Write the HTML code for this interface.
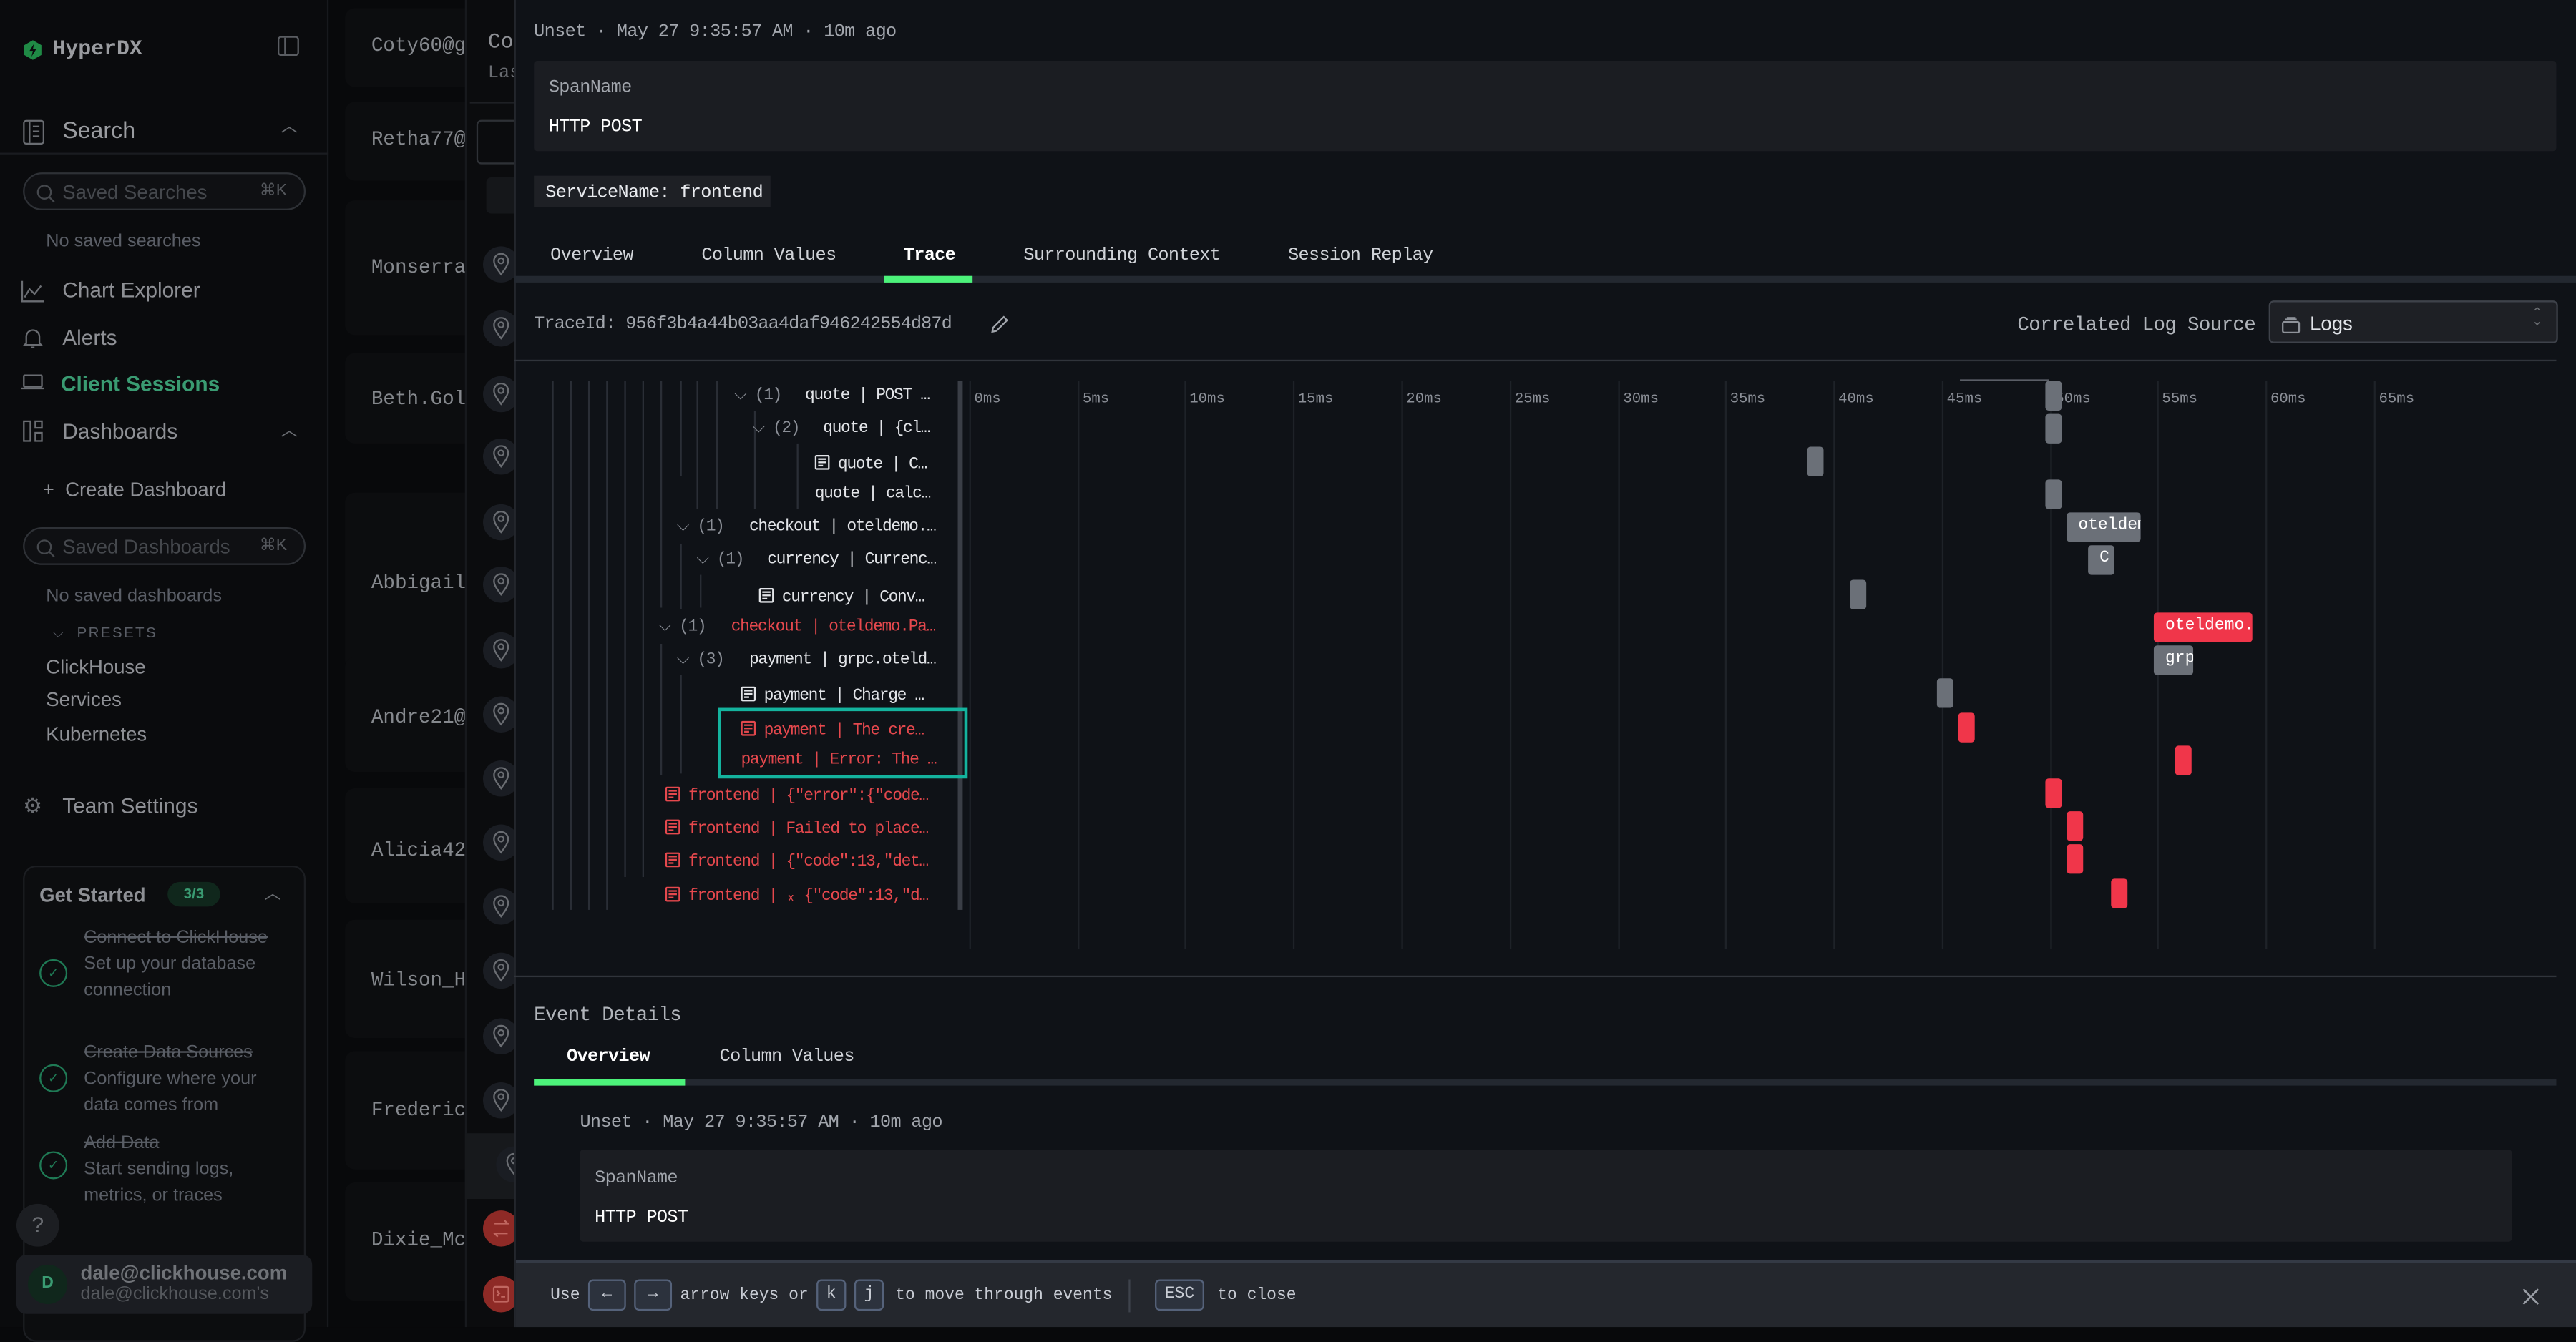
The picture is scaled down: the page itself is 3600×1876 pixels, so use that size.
<!DOCTYPE html>
<html><head><meta charset="utf-8">
<style>
*{margin:0;padding:0;box-sizing:border-box}
html,body{width:3600px;height:1856px;overflow:hidden;background:#08090b}
#w{position:absolute;left:0;top:0;width:1568px;height:808px;transform:scale(2.29592);transform-origin:0 0;background:#08090b;font-family:"Liberation Mono",monospace;}
.a{position:absolute;white-space:nowrap;line-height:1}
.a:not([style*="height"]){margin-top:2px}
.s{font-family:"Liberation Sans",sans-serif}
.m{font-family:"Liberation Mono",monospace}
.tr{font-size:10px;letter-spacing:-0.6px;color:#e2e4e8}
.red{color:#e5484d}
.mu{color:#8b8f97}
.vl{position:absolute;width:1px;background:#2a2e36}
.gl{position:absolute;width:1px;top:232px;height:346px;background:#1e2228}
.bar{position:absolute;height:18px;border-radius:2px;background:#6b7078;color:#fff;font-size:10px;line-height:18px;padding-left:7px;overflow:hidden}
.rb{background:#f0364a}
.kbd{position:absolute;top:779px;height:19px;border:1px solid #55627a;border-radius:3px;background:#2c323d;color:#c8ccd4;font-size:10px;text-align:center;line-height:17px}
.pin{position:absolute;left:294px;width:22px;height:22px;border-radius:11px;background:#1a1d23}
.pin svg{position:absolute;left:6px;top:4px}
.ic{display:inline-block;width:9px;height:9px;border:1px solid currentColor;border-radius:1px;vertical-align:-1px;margin-right:5px;background:linear-gradient(currentColor,currentColor) 1px 1px/5px 1px no-repeat,linear-gradient(currentColor,currentColor) 1px 3px/5px 1px no-repeat,linear-gradient(currentColor,currentColor) 1px 5px/3px 1px no-repeat}
.ck{position:absolute;left:24px;width:17px;height:17px;border:1px solid #1f7a55;border-radius:50%;color:#1f7a55;font-size:8px;text-align:center;line-height:15px;font-family:"DejaVu Sans",sans-serif}
</style></head><body><div id="w">

<!-- Sidebar -->
<div style="position:absolute;left:0;top:0;width:200px;height:808px;background:#0a0b0d;border-right:1px solid #17191d"></div>
<svg class="a" style="left:14px;top:22px" width="12" height="13" viewBox="0 0 12 13"><path d="M6 0.5L11.2 3.5V9.5L6 12.5L0.8 9.5V3.5Z" fill="#1f8a45"/><path d="M6.8 2.5L4 7H6L5.2 10.5L8 6H6Z" fill="#0a0b0d"/></svg>
<div class="a m" style="left:32px;top:21px;font-size:13px;font-weight:bold;color:#9a9ca0">HyperDX</div>
<div class="a" style="left:169px;top:22px;width:13px;height:12px;border:1px solid #5a5d62;border-radius:2px"><div style="position:absolute;left:3px;top:0;width:1px;height:10px;background:#5a5d62"></div></div>
<svg class="a" style="left:14px;top:71px" width="13" height="15" viewBox="0 0 13 15"><rect x="0.5" y="0.5" width="12" height="14" rx="1.5" fill="none" stroke="#6a6d72"/><path d="M4 1V14M6 4H10M6 7H10M6 10H10" stroke="#6a6d72"/></svg>
<div class="a s" style="left:38px;top:70px;font-size:14px;color:#9a9ca0">Search</div>
<div class="a s" style="left:171px;top:71px;font-size:10px;color:#6a6d72">︿</div>
<div class="a" style="left:0;top:93px;width:200px;height:1px;background:#1a1c20"></div>
<div class="a" style="left:14px;top:105px;width:172px;height:23px;border:1px solid #2e3136;border-radius:12px;background:#0f1013"></div>
<svg class="a" style="left:22px;top:110px" width="12" height="12" viewBox="0 0 12 12"><circle cx="5" cy="5" r="4" fill="none" stroke="#45484d"/><path d="M8 8L11 11" stroke="#45484d"/></svg>
<div class="a s" style="left:38px;top:109px;font-size:12px;color:#45484d">Saved Searches</div>
<div class="a s" style="left:158px;top:110px;font-size:10px;color:#55585d">⌘K</div>
<div class="a s" style="left:28px;top:140px;font-size:11px;color:#5a5e66">No saved searches</div>
<div class="a s" style="left:38px;top:168px;font-size:13px;color:#8e9095">Chart Explorer</div>
<div class="a s" style="left:38px;top:197px;font-size:13px;color:#8e9095">Alerts</div>
<div class="a s" style="left:37px;top:225px;font-size:13px;color:#3a9b72;font-weight:bold">Client Sessions</div>
<div class="a s" style="left:38px;top:254px;font-size:13px;color:#8e9095">Dashboards</div>
<div class="a s" style="left:171px;top:256px;font-size:10px;color:#6a6d72">︿</div>
<svg class="a" style="left:13px;top:169px" width="14" height="13" viewBox="0 0 14 13"><path d="M0.5 0V12.5H14M2 10L5 5L8 8L12 3" fill="none" stroke="#6a6d72"/></svg>
<svg class="a" style="left:14px;top:197px" width="12" height="14" viewBox="0 0 12 14"><path d="M2 10V6A4 4 0 0 1 10 6V10L11 11H1Z M5 12.5H7" fill="none" stroke="#6a6d72"/></svg>
<div class="a" style="left:14px;top:228px;width:12px;height:8px;border:1px solid #6a6d72;border-radius:1px"></div>
<div class="a" style="left:13px;top:236px;width:14px;height:1px;background:#6a6d72"></div>
<div class="a" style="left:14px;top:256px;width:5px;height:13px;border:1px solid #6a6d72"></div>
<div class="a" style="left:21px;top:256px;width:5px;height:5px;border:1px solid #6a6d72"></div>
<div class="a" style="left:21px;top:263px;width:5px;height:6px;border:1px solid #6a6d72"></div>
<div class="a s" style="left:26px;top:290px;font-size:12px;color:#8e9095">+ &nbsp;Create Dashboard</div>
<div class="a" style="left:14px;top:321px;width:172px;height:23px;border:1px solid #2e3136;border-radius:12px;background:#0f1013"></div>
<svg class="a" style="left:22px;top:326px" width="12" height="12" viewBox="0 0 12 12"><circle cx="5" cy="5" r="4" fill="none" stroke="#45484d"/><path d="M8 8L11 11" stroke="#45484d"/></svg>
<div class="a s" style="left:38px;top:325px;font-size:12px;color:#45484d">Saved Dashboards</div>
<div class="a s" style="left:158px;top:326px;font-size:10px;color:#55585d">⌘K</div>
<div class="a s" style="left:28px;top:356px;font-size:11px;color:#5a5e66">No saved dashboards</div>
<div class="a s" style="left:32px;top:379px;font-size:9px;color:#5a5e66;letter-spacing:1px">⌵ &nbsp;PRESETS</div>
<div class="a s" style="left:28px;top:398px;font-size:12px;color:#8e9095">ClickHouse</div>
<div class="a s" style="left:28px;top:418px;font-size:12px;color:#8e9095">Services</div>
<div class="a s" style="left:28px;top:439px;font-size:12px;color:#8e9095">Kubernetes</div>
<div class="a s" style="left:14px;top:482px;font-size:13px;color:#6a6d72">⚙</div>
<div class="a s" style="left:38px;top:482px;font-size:13px;color:#8e9095">Team Settings</div>
<div class="a" style="left:14px;top:527px;width:172px;height:290px;border:1px solid #1c1e22;border-radius:8px;background:#0c0d0f"></div>
<div class="a s" style="left:24px;top:537px;font-size:12px;font-weight:bold;color:#8e9095">Get Started</div>
<div class="a s" style="left:102px;top:537px;width:32px;height:15px;border-radius:8px;background:#10271c;color:#3a9b72;font-size:9px;font-weight:bold;text-align:center;line-height:15px">3/3</div>
<div class="a s" style="left:161px;top:538px;font-size:10px;color:#6a6d72">︿</div>
<div class="a s" style="left:51px;top:563px;font-size:11px;line-height:16px;color:#5a5e66;white-space:normal;width:120px"><s>Connect to ClickHouse</s><br>Set up your database connection</div>
<div class="a s" style="left:51px;top:633px;font-size:11px;line-height:16px;color:#5a5e66;white-space:normal;width:125px"><s>Create Data Sources</s><br>Configure where your data comes from</div>
<div class="a s" style="left:51px;top:688px;font-size:11px;line-height:16px;color:#5a5e66;white-space:normal;width:120px"><s>Add Data</s><br>Start sending logs, metrics, or traces</div>
<div class="ck" style="top:584px">✓</div>
<div class="ck" style="top:648px">✓</div>
<div class="ck" style="top:701px">✓</div>
<div class="a s" style="left:10px;top:733px;width:26px;height:26px;border-radius:13px;background:#1c1e22;color:#6a6d72;font-size:13px;text-align:center;line-height:26px">?</div>
<div class="a" style="left:10px;top:764px;width:180px;height:36px;border-radius:6px;background:#1b1d22"></div>
<div class="a s" style="left:17px;top:770px;width:24px;height:24px;border-radius:12px;background:#10271c;color:#3a9b72;font-size:10px;font-weight:bold;text-align:center;line-height:24px">D</div>
<div class="a s" style="left:49px;top:767px;font-size:12px;font-weight:bold;color:#707378">dale@clickhouse.com</div>
<div class="a s" style="left:49px;top:781px;font-size:11px;color:#55585d">dale@clickhouse.com's</div>

<!-- middle list -->
<div class="a" style="left:210px;top:5px;width:80px;height:48px;background:#0c0d0f;border-radius:6px"></div>
<div class="a" style="left:210px;top:62px;width:80px;height:48px;background:#0c0d0f;border-radius:6px"></div>
<div class="a" style="left:210px;top:122px;width:80px;height:82px;background:#0c0d0f;border-radius:6px"></div>
<div class="a" style="left:210px;top:215px;width:80px;height:55px;background:#0c0d0f;border-radius:6px"></div>
<div class="a" style="left:210px;top:300px;width:80px;height:108px;background:#0c0d0f;border-radius:6px"></div>
<div class="a" style="left:210px;top:400px;width:80px;height:70px;background:#0c0d0f;border-radius:6px"></div>
<div class="a" style="left:210px;top:480px;width:80px;height:70px;background:#0c0d0f;border-radius:6px"></div>
<div class="a" style="left:210px;top:560px;width:80px;height:72px;background:#0c0d0f;border-radius:6px"></div>
<div class="a" style="left:210px;top:640px;width:80px;height:72px;background:#0c0d0f;border-radius:6px"></div>
<div class="a" style="left:210px;top:720px;width:80px;height:72px;background:#0c0d0f;border-radius:6px"></div>
<div class="a m" style="left:226px;top:20px;font-size:12px;color:#85888d">Coty60@g</div>
<div class="a m" style="left:226px;top:77px;font-size:12px;color:#85888d">Retha77@</div>
<div class="a m" style="left:226px;top:155px;font-size:12px;color:#85888d">Monserra</div>
<div class="a m" style="left:226px;top:235px;font-size:12px;color:#85888d">Beth.Gol</div>
<div class="a m" style="left:226px;top:347px;font-size:12px;color:#85888d">Abbigail</div>
<div class="a m" style="left:226px;top:429px;font-size:12px;color:#85888d">Andre21@</div>
<div class="a m" style="left:226px;top:510px;font-size:12px;color:#85888d">Alicia42</div>
<div class="a m" style="left:226px;top:589px;font-size:12px;color:#85888d">Wilson_H</div>
<div class="a m" style="left:226px;top:668px;font-size:12px;color:#85888d">Frederic</div>
<div class="a m" style="left:226px;top:747px;font-size:12px;color:#85888d">Dixie_Mc</div>
<!-- column 283-313 -->
<div class="a" style="left:283px;top:0;width:31px;height:808px;background:#0b0c0e;border-left:1px solid #17191d"></div>
<div class="a m" style="left:297px;top:17px;font-size:13px;color:#8e9095">Co</div>
<div class="a m" style="left:297px;top:38px;font-size:11px;color:#6a6d72">Las</div>
<div class="a" style="left:286px;top:62px;width:28px;height:1px;background:#1e2024"></div>
<div class="a" style="left:290px;top:73px;width:26px;height:27px;border:1px solid #2e3136;border-radius:3px"></div>
<div class="a" style="left:296px;top:108px;width:20px;height:22px;background:#15171a;border-radius:3px"></div>
<div class="pin" style="top:150px"><svg width="10" height="14" viewBox="0 0 10 14"><path d="M5 13C2 9 0.7 7 0.7 4.8A4.3 4.3 0 0 1 9.3 4.8C9.3 7 8 9 5 13Z" fill="none" stroke="#6a6d72"/><circle cx="5" cy="4.8" r="1.6" fill="none" stroke="#6a6d72"/></svg></div>
<div class="pin" style="top:189px"><svg width="10" height="14" viewBox="0 0 10 14"><path d="M5 13C2 9 0.7 7 0.7 4.8A4.3 4.3 0 0 1 9.3 4.8C9.3 7 8 9 5 13Z" fill="none" stroke="#6a6d72"/><circle cx="5" cy="4.8" r="1.6" fill="none" stroke="#6a6d72"/></svg></div>
<div class="pin" style="top:229px"><svg width="10" height="14" viewBox="0 0 10 14"><path d="M5 13C2 9 0.7 7 0.7 4.8A4.3 4.3 0 0 1 9.3 4.8C9.3 7 8 9 5 13Z" fill="none" stroke="#6a6d72"/><circle cx="5" cy="4.8" r="1.6" fill="none" stroke="#6a6d72"/></svg></div>
<div class="pin" style="top:267px"><svg width="10" height="14" viewBox="0 0 10 14"><path d="M5 13C2 9 0.7 7 0.7 4.8A4.3 4.3 0 0 1 9.3 4.8C9.3 7 8 9 5 13Z" fill="none" stroke="#6a6d72"/><circle cx="5" cy="4.8" r="1.6" fill="none" stroke="#6a6d72"/></svg></div>
<div class="pin" style="top:307px"><svg width="10" height="14" viewBox="0 0 10 14"><path d="M5 13C2 9 0.7 7 0.7 4.8A4.3 4.3 0 0 1 9.3 4.8C9.3 7 8 9 5 13Z" fill="none" stroke="#6a6d72"/><circle cx="5" cy="4.8" r="1.6" fill="none" stroke="#6a6d72"/></svg></div>
<div class="pin" style="top:345px"><svg width="10" height="14" viewBox="0 0 10 14"><path d="M5 13C2 9 0.7 7 0.7 4.8A4.3 4.3 0 0 1 9.3 4.8C9.3 7 8 9 5 13Z" fill="none" stroke="#6a6d72"/><circle cx="5" cy="4.8" r="1.6" fill="none" stroke="#6a6d72"/></svg></div>
<div class="pin" style="top:385px"><svg width="10" height="14" viewBox="0 0 10 14"><path d="M5 13C2 9 0.7 7 0.7 4.8A4.3 4.3 0 0 1 9.3 4.8C9.3 7 8 9 5 13Z" fill="none" stroke="#6a6d72"/><circle cx="5" cy="4.8" r="1.6" fill="none" stroke="#6a6d72"/></svg></div>
<div class="pin" style="top:424px"><svg width="10" height="14" viewBox="0 0 10 14"><path d="M5 13C2 9 0.7 7 0.7 4.8A4.3 4.3 0 0 1 9.3 4.8C9.3 7 8 9 5 13Z" fill="none" stroke="#6a6d72"/><circle cx="5" cy="4.8" r="1.6" fill="none" stroke="#6a6d72"/></svg></div>
<div class="pin" style="top:463px"><svg width="10" height="14" viewBox="0 0 10 14"><path d="M5 13C2 9 0.7 7 0.7 4.8A4.3 4.3 0 0 1 9.3 4.8C9.3 7 8 9 5 13Z" fill="none" stroke="#6a6d72"/><circle cx="5" cy="4.8" r="1.6" fill="none" stroke="#6a6d72"/></svg></div>
<div class="pin" style="top:502px"><svg width="10" height="14" viewBox="0 0 10 14"><path d="M5 13C2 9 0.7 7 0.7 4.8A4.3 4.3 0 0 1 9.3 4.8C9.3 7 8 9 5 13Z" fill="none" stroke="#6a6d72"/><circle cx="5" cy="4.8" r="1.6" fill="none" stroke="#6a6d72"/></svg></div>
<div class="pin" style="top:541px"><svg width="10" height="14" viewBox="0 0 10 14"><path d="M5 13C2 9 0.7 7 0.7 4.8A4.3 4.3 0 0 1 9.3 4.8C9.3 7 8 9 5 13Z" fill="none" stroke="#6a6d72"/><circle cx="5" cy="4.8" r="1.6" fill="none" stroke="#6a6d72"/></svg></div>
<div class="pin" style="top:580px"><svg width="10" height="14" viewBox="0 0 10 14"><path d="M5 13C2 9 0.7 7 0.7 4.8A4.3 4.3 0 0 1 9.3 4.8C9.3 7 8 9 5 13Z" fill="none" stroke="#6a6d72"/><circle cx="5" cy="4.8" r="1.6" fill="none" stroke="#6a6d72"/></svg></div>
<div class="pin" style="top:620px"><svg width="10" height="14" viewBox="0 0 10 14"><path d="M5 13C2 9 0.7 7 0.7 4.8A4.3 4.3 0 0 1 9.3 4.8C9.3 7 8 9 5 13Z" fill="none" stroke="#6a6d72"/><circle cx="5" cy="4.8" r="1.6" fill="none" stroke="#6a6d72"/></svg></div>
<div class="pin" style="top:659px"><svg width="10" height="14" viewBox="0 0 10 14"><path d="M5 13C2 9 0.7 7 0.7 4.8A4.3 4.3 0 0 1 9.3 4.8C9.3 7 8 9 5 13Z" fill="none" stroke="#6a6d72"/><circle cx="5" cy="4.8" r="1.6" fill="none" stroke="#6a6d72"/></svg></div>
<div class="a" style="left:283px;top:690px;width:31px;height:40px;background:#17191c"></div>
<div class="pin" style="top:698px;left:302px"><svg width="10" height="14" viewBox="0 0 10 14"><path d="M5 13C2 9 0.7 7 0.7 4.8A4.3 4.3 0 0 1 9.3 4.8C9.3 7 8 9 5 13Z" fill="none" stroke="#6a6d72"/><circle cx="5" cy="4.8" r="1.6" fill="none" stroke="#6a6d72"/></svg></div>
<div class="pin" style="top:737px;background:#8e2a26"><svg width="10" height="14" viewBox="0 0 10 14"><path d="M1 4H9L7 2M9 10H1L3 12" fill="none" stroke="#c06660"/></svg></div>
<div class="pin" style="top:777px;background:#8e2a26"><svg width="10" height="14" viewBox="0 0 10 14"><rect x="0.5" y="2.5" width="9" height="9" rx="1" fill="none" stroke="#c06660"/><path d="M2.5 5L4 6.5L2.5 8M5 8.5H7.5" fill="none" stroke="#c06660"/></svg></div>

<!-- Panel -->
<div class="a" style="left:313px;top:0;width:1255px;height:808px;background:#0f1217;border-left:1px solid #23262c"></div>
<div class="a" style="left:325px;top:13px;font-size:11px;color:#a2a6ad;letter-spacing:-0.3px">Unset · May 27 9:35:57 AM · 10m ago</div>
<div class="a" style="left:325px;top:37px;width:1231px;height:55px;background:#1b1d22;border-radius:2px"></div>
<div class="a" style="left:334px;top:47px;font-size:11px;color:#a2a6ad;letter-spacing:-0.3px">SpanName</div>
<div class="a" style="left:334px;top:71px;font-size:11px;color:#fff;letter-spacing:-0.3px">HTTP POST</div>
<div class="a" style="left:325px;top:107px;width:144px;height:19px;background:#1e2025"></div>
<div class="a" style="left:332px;top:111px;font-size:11px;color:#e8eaee;letter-spacing:-0.3px">ServiceName: frontend</div>
<div class="a" style="left:335px;top:149px;font-size:11px;color:#d0d3d8;letter-spacing:-0.3px">Overview</div>
<div class="a" style="left:427px;top:149px;font-size:11px;color:#d0d3d8;letter-spacing:-0.3px">Column Values</div>
<div class="a" style="left:550px;top:149px;font-size:11px;color:#fff;font-weight:bold;letter-spacing:-0.3px">Trace</div>
<div class="a" style="left:623px;top:149px;font-size:11px;color:#d0d3d8;letter-spacing:-0.3px">Surrounding Context</div>
<div class="a" style="left:784px;top:149px;font-size:11px;color:#d0d3d8;letter-spacing:-0.3px">Session Replay</div>
<div class="a" style="left:313px;top:168px;width:1255px;height:4px;background:#232830"></div>
<div class="a" style="left:538px;top:168px;width:54px;height:4px;background:#4cf27a"></div>
<div class="a" style="left:325px;top:191px;font-size:11px;color:#a2a6ad;letter-spacing:-0.4px">TraceId: 956f3b4a44b03aa4daf946242554d87d</div>
<svg class="a" style="left:603px;top:190px" width="11" height="11" viewBox="0 0 11 11"><path d="M1 10L1.5 7.5L8 1L10 3L3.5 9.5Z" fill="none" stroke="#a2a6ad"/></svg>
<div class="a" style="left:1228px;top:190px;font-size:12px;color:#b0b4ba;letter-spacing:-0.3px">Correlated Log Source</div>
<div class="a" style="left:1381px;top:183px;width:176px;height:26px;border:1px solid #3e424a;border-radius:3px;background:#1e2025"></div>
<svg class="a" style="left:1389px;top:191px" width="11" height="10" viewBox="0 0 11 10"><rect x="0.5" y="3" width="10" height="6.5" rx="1" fill="none" stroke="#8e9299"/><path d="M2 1.5H9M3 0.5H8" stroke="#8e9299"/></svg>
<div class="a s" style="left:1406px;top:189px;font-size:12px;color:#e0e3e8">Logs</div>
<div class="a s" style="left:1541px;top:188px;font-size:8px;color:#6a6d72;line-height:5px">⌃<br>⌄</div>
<div class="a" style="left:313px;top:219px;width:1243px;height:1px;background:#30343b"></div>

<!-- tree guide lines -->
<div class="vl" style="left:336px;top:232px;height:322px"></div>
<div class="vl" style="left:347px;top:232px;height:322px"></div>
<div class="vl" style="left:358px;top:232px;height:322px"></div>
<div class="vl" style="left:369px;top:232px;height:322px"></div>
<div class="vl" style="left:380px;top:232px;height:302px"></div>
<div class="vl" style="left:391px;top:232px;height:302px"></div>
<div class="vl" style="left:402px;top:232px;height:138px"></div>
<div class="vl" style="left:414px;top:232px;height:58px"></div>
<div class="vl" style="left:424px;top:232px;height:78px"></div>
<div class="vl" style="left:436px;top:232px;height:78px"></div>
<div class="vl" style="left:459px;top:250px;height:60px"></div>
<div class="vl" style="left:485px;top:270px;height:40px"></div>
<div class="vl" style="left:414px;top:331px;height:40px"></div>
<div class="vl" style="left:426px;top:350px;height:20px"></div>
<div class="vl" style="left:402px;top:392px;height:80px"></div>
<div class="vl" style="left:414px;top:411px;height:60px"></div>
<div class="a" style="left:583px;top:232px;width:3px;height:322px;background:#3a3e46"></div>

<!-- tree rows -->
<div class="a tr mu" style="left:447px;top:235px">⌵ (1)</div><div class="a tr" style="left:490px;top:235px">quote | POST …</div>
<div class="a tr mu" style="left:458px;top:255px">⌵ (2)</div><div class="a tr" style="left:501px;top:255px">quote | {cl…</div>
<div class="a tr" style="left:496px;top:275px"><span class="ic"></span>quote | C…</div>
<div class="a tr" style="left:496px;top:295px">quote | calc…</div>
<div class="a tr mu" style="left:412px;top:315px">⌵ (1)</div><div class="a tr" style="left:456px;top:315px">checkout | oteldemo.…</div>
<div class="a tr mu" style="left:424px;top:335px">⌵ (1)</div><div class="a tr" style="left:467px;top:335px">currency | Currenc…</div>
<div class="a tr" style="left:462px;top:356px"><span class="ic"></span>currency | Conv…</div>
<div class="a tr mu" style="left:401px;top:376px">⌵ (1)</div><div class="a tr red" style="left:445px;top:376px">checkout | oteldemo.Pa…</div>
<div class="a tr mu" style="left:412px;top:396px">⌵ (3)</div><div class="a tr" style="left:456px;top:396px">payment | grpc.oteld…</div>
<div class="a tr" style="left:451px;top:416px"><span class="ic"></span>payment | Charge …</div>
<div class="a tr red" style="left:451px;top:437px"><span class="ic"></span>payment | The cre…</div>
<div class="a tr red" style="left:451px;top:457px">payment | Error: The …</div>
<div class="a tr red" style="left:405px;top:477px"><span class="ic"></span>frontend | {"error":{"code…</div>
<div class="a tr red" style="left:405px;top:497px"><span class="ic"></span>frontend | Failed to place…</div>
<div class="a tr red" style="left:405px;top:517px"><span class="ic"></span>frontend | {"code":13,"det…</div>
<div class="a tr red" style="left:405px;top:538px"><span class="ic"></span>frontend | ₓ {"code":13,"d…</div>
<div class="a" style="left:437px;top:431px;width:152px;height:43px;border:2px solid #14b39e"></div>

<!-- timeline -->
<div class="gl" style="left:590px"></div><div class="gl" style="left:656px"></div><div class="gl" style="left:721px"></div>
<div class="gl" style="left:787px"></div><div class="gl" style="left:853px"></div><div class="gl" style="left:919px"></div>
<div class="gl" style="left:985px"></div><div class="gl" style="left:1050px"></div><div class="gl" style="left:1116px"></div>
<div class="gl" style="left:1182px"></div><div class="gl" style="left:1248px"></div><div class="gl" style="left:1313px"></div>
<div class="gl" style="left:1379px"></div><div class="gl" style="left:1445px"></div>
<div class="a mu" style="left:593px;top:237px;font-size:9px">0ms</div>
<div class="a mu" style="left:659px;top:237px;font-size:9px">5ms</div>
<div class="a mu" style="left:724px;top:237px;font-size:9px">10ms</div>
<div class="a mu" style="left:790px;top:237px;font-size:9px">15ms</div>
<div class="a mu" style="left:856px;top:237px;font-size:9px">20ms</div>
<div class="a mu" style="left:922px;top:237px;font-size:9px">25ms</div>
<div class="a mu" style="left:988px;top:237px;font-size:9px">30ms</div>
<div class="a mu" style="left:1053px;top:237px;font-size:9px">35ms</div>
<div class="a mu" style="left:1119px;top:237px;font-size:9px">40ms</div>
<div class="a mu" style="left:1185px;top:237px;font-size:9px">45ms</div>
<div class="a mu" style="left:1251px;top:237px;font-size:9px">50ms</div>
<div class="a mu" style="left:1316px;top:237px;font-size:9px">55ms</div>
<div class="a mu" style="left:1382px;top:237px;font-size:9px">60ms</div>
<div class="a mu" style="left:1448px;top:237px;font-size:9px">65ms</div>
<div class="a" style="left:1193px;top:231px;width:54px;height:1px;background:#5a5e66"></div>
<div class="bar" style="left:1245px;top:232px;width:10px;padding:0"></div>
<div class="bar" style="left:1245px;top:252px;width:10px;padding:0"></div>
<div class="bar" style="left:1100px;top:272px;width:10px;padding:0"></div>
<div class="bar" style="left:1245px;top:292px;width:10px;padding:0"></div>
<div class="bar" style="left:1258px;top:312px;width:45px">oteldem</div>
<div class="bar" style="left:1271px;top:332px;width:16px">C</div>
<div class="bar" style="left:1126px;top:353px;width:10px;padding:0"></div>
<div class="bar rb" style="left:1311px;top:373px;width:60px">oteldemo.</div>
<div class="bar" style="left:1311px;top:393px;width:24px">grp</div>
<div class="bar" style="left:1179px;top:413px;width:10px;padding:0"></div>
<div class="bar rb" style="left:1192px;top:434px;width:10px;padding:0"></div>
<div class="bar rb" style="left:1324px;top:454px;width:10px;padding:0"></div>
<div class="bar rb" style="left:1245px;top:474px;width:10px;padding:0"></div>
<div class="bar rb" style="left:1258px;top:494px;width:10px;padding:0"></div>
<div class="bar rb" style="left:1258px;top:514px;width:10px;padding:0"></div>
<div class="bar rb" style="left:1285px;top:535px;width:10px;padding:0"></div>
<div class="a" style="left:313px;top:594px;width:1243px;height:1px;background:#30343b"></div>

<!-- Event details -->
<div class="a" style="left:325px;top:610px;font-size:12px;color:#b0b4ba;letter-spacing:-0.3px">Event Details</div>
<div class="a" style="left:345px;top:637px;font-size:11px;color:#fff;font-weight:bold;letter-spacing:-0.3px">Overview</div>
<div class="a" style="left:438px;top:637px;font-size:11px;color:#d0d3d8;letter-spacing:-0.3px">Column Values</div>
<div class="a" style="left:325px;top:657px;width:1231px;height:4px;background:#232830"></div>
<div class="a" style="left:325px;top:657px;width:92px;height:4px;background:#4cf27a"></div>
<div class="a" style="left:353px;top:677px;font-size:11px;color:#a2a6ad;letter-spacing:-0.3px">Unset · May 27 9:35:57 AM · 10m ago</div>
<div class="a" style="left:353px;top:700px;width:1176px;height:56px;background:#1b1d22;border-radius:2px"></div>
<div class="a" style="left:362px;top:711px;font-size:11px;color:#a2a6ad;letter-spacing:-0.3px">SpanName</div>
<div class="a" style="left:362px;top:735px;font-size:11px;color:#fff;letter-spacing:-0.3px">HTTP POST</div>

<!-- bottom bar -->
<div class="a" style="left:314px;top:767px;width:1254px;height:41px;background:#24272d;border-top:2px solid #343a45"></div>
<div class="a" style="left:335px;top:783px;font-size:10px;color:#c8ccd4">Use</div>
<div class="kbd" style="left:358px;width:23px">←</div>
<div class="kbd" style="left:386px;width:23px">→</div>
<div class="a" style="left:414px;top:783px;font-size:10px;color:#c8ccd4">arrow keys or</div>
<div class="kbd" style="left:497px;width:18px">k</div>
<div class="kbd" style="left:520px;width:18px">j</div>
<div class="a" style="left:545px;top:783px;font-size:10px;color:#c8ccd4">to move through events</div>
<div class="a" style="left:687px;top:779px;width:1px;height:20px;background:#3e434c"></div>
<div class="kbd" style="left:703px;width:30px">ESC</div>
<div class="a" style="left:741px;top:783px;font-size:10px;color:#c8ccd4">to close</div>
<svg class="a" style="left:1535px;top:782px" width="11" height="11" viewBox="0 0 11 11"><path d="M1 1L10 10M10 1L1 10" stroke="#9a9ea6" stroke-width="1.2"/></svg>
</div></body></html>
